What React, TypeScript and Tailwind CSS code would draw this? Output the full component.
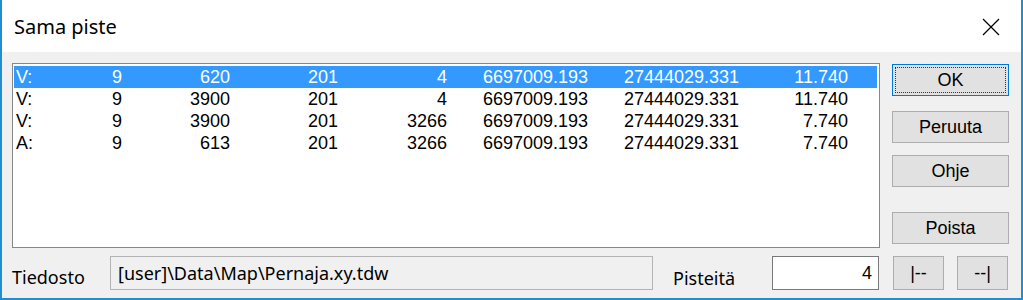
import React from "react";

const rows = [
  ["V:", "9", "620", "201", "4", "6697009.193", "27444029.331", "11.740"],
  ["V:", "9", "3900", "201", "4", "6697009.193", "27444029.331", "11.740"],
  ["V:", "9", "3900", "201", "3266", "6697009.193", "27444029.331", "7.740"],
  ["A:", "9", "613", "201", "3266", "6697009.193", "27444029.331", "7.740"],
];

const listFont = { fontFamily: '"Liberation Sans", Arial, sans-serif' };
const uiFont = { fontFamily: '"Noto Sans", "Open Sans", sans-serif' };

function Btn({ children, focus = false, className = "" }: { children: React.ReactNode; focus?: boolean; className?: string }) {
  return (
    <div
      className={
        "flex shrink-0 items-center justify-center bg-[#e1e1e1] text-[18px] text-black leading-none border " +
        (focus ? "border-[#0078d7] p-[2px] " : "border-[#adadad] ") +
        className
      }
      style={listFont}
    >
      {focus ? (
        <div className="flex h-full w-full items-center justify-center border border-dotted border-[#333]">{children}</div>
      ) : (
        children
      )}
    </div>
  );
}

export default function App() {
  return (
    <div className="flex h-[300px] w-[1023px] flex-col border-x-2 border-b-2 border-[#1e90d0] bg-[#f0f0f0]">
      <div className="flex h-[52px] shrink-0 items-center justify-between bg-white pl-[12px] pr-[21px]">
        <span className="mt-[1px] text-[20px] text-black" style={uiFont}>Sama piste</span>
        <svg width="18" height="18" viewBox="0 0 18 18" className="mt-[1px]">
          <path d="M1 1 L17 17 M17 1 L1 17" stroke="#000" strokeWidth="1.2" fill="none" />
        </svg>
      </div>
      <div className="flex flex-col pl-[10px] pt-[11px]">
        <div className="flex items-start">
          <div className="h-[185px] w-[868px] shrink-0 border border-[#828790] bg-white pl-[1px] pt-[2px]" style={listFont}>
            {rows.map((r, i) => (
              <div
                key={i}
                className={
                  "grid h-[22px] w-[863px] grid-cols-[61px_47px_108px_108px_109px_141px_151px_109px] items-center text-[18px] leading-none " +
                  (i === 0 ? "bg-[#3399ff] text-white" : "text-black")
                }
              >
                {r.map((c, j) => (
                  <span key={j} className={j === 0 ? "pl-[2px]" : "text-right"}>
                    {c}
                  </span>
                ))}
              </div>
            ))}
          </div>
          <div className="ml-[12px] flex w-[117px] shrink-0 flex-col pt-[1px]">
            <Btn focus className="h-[32px]">OK</Btn>
            <Btn className="mt-[15px] h-[32px]">Peruuta</Btn>
            <Btn className="mt-[12px] h-[32px]">Ohje</Btn>
            <Btn className="mt-[25px] h-[32px]">Poista</Btn>
          </div>
        </div>
        <div className="mt-[8px] flex items-start">
          <span className="mt-[8px] w-[98px] text-[18px] text-black" style={uiFont}>Tiedosto</span>
          <div className="flex h-[34px] w-[543px] items-center border border-[#b4b4b4] bg-[#f0f0f0] pl-[7px] text-[18px] text-black" style={uiFont}>
            [user]\Data\Map\Pernaja.xy.tdw
          </div>
          <span className="ml-[20px] mt-[9px] w-[99px] text-[18px] text-black" style={uiFont}>Pisteitä</span>
          <div className="flex h-[34px] w-[107px] items-center justify-end border border-[#7a7a7a] bg-white pr-[6px] text-[18px] text-black" style={listFont}>
            4
          </div>
          <Btn className="ml-[14px] h-[34px] w-[51px]">|--</Btn>
          <Btn className="ml-[13px] h-[34px] w-[51px]">--|</Btn>
        </div>
      </div>
    </div>
  );
}
